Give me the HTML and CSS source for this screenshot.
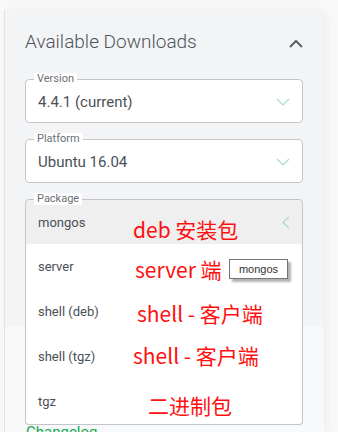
FILE: index.html
```html
<!DOCTYPE html>
<html lang="en">
<head>
	<meta charset="UTF-8">
	<title>Available Downloads</title>
	<link rel="stylesheet" href="styles.css">
</head>
<body>
	<div class="wrap">
		<div class="panel">
			<div class="panel-body">
				<div class="head">
					<h2 class="title">Available Downloads</h2>
					<svg class="collapse" width="14" height="9" viewBox="0 0 14 9"><polyline points="1,8 7,2 13,8" fill="none" stroke="#5b6168" stroke-width="2"/></svg>
				</div>

				<fieldset class="field">
					<legend>Version</legend>
					<div class="value">
						<span>4.4.1 (current)</span>
						<svg width="14" height="8" viewBox="0 0 14 8"><polyline points="1,1 7,7 13,1" fill="none" stroke="#a9dcc4" stroke-width="1.2"/></svg>
					</div>
				</fieldset>

				<fieldset class="field">
					<legend>Platform</legend>
					<div class="value">
						<span>Ubuntu 16.04</span>
						<svg width="14" height="8" viewBox="0 0 14 8"><polyline points="1,1 7,7 13,1" fill="none" stroke="#a9dcc4" stroke-width="1.2"/></svg>
					</div>
				</fieldset>

				<fieldset class="field field-open">
					<legend>Package</legend>
					<div class="value value-small">
						<span class="label">mongos</span>
						<span class="note note-deb">deb 安装包</span>
						<svg class="arrow-left" width="8" height="13" viewBox="0 0 8 13"><polyline points="7,1 1,6.5 7,12" fill="none" stroke="#a9dcc4" stroke-width="1.2"/></svg>
					</div>
					<ul class="menu">
						<li><span class="label">server</span><span class="note note-server">server 端</span></li>
						<li><span class="label">shell (deb)</span><span class="note note-sdeb">shell - 客户端</span></li>
						<li><span class="label">shell (tgz)</span><span class="note note-stgz">shell - 客户端</span></li>
						<li><span class="label">tgz</span><span class="note note-tgz">二进制包</span></li>
						<div class="tip">mongos</div>
					</ul>
				</fieldset>
			</div>
			<div class="panel-foot">
				<a class="link" href="#">Changelog</a>
			</div>
		</div>
	</div>
</body>
</html>
```

FILE: styles.css
```css
body { margin: 0;background: #f8f8f8;font-family: Roboto, "Liberation Sans", sans-serif;color: #4b5058; }
.wrap { padding: 10px 14px 0 4px; }
.panel { border-left: 1px solid #e2e3e6;border-top-right-radius: 8px;box-shadow: 3px 0 6px rgba(0,0,0,.04); }
.panel-body { background: #f3f4f6;border-top-right-radius: 8px;padding: 0 21px 81px 20px; }
.panel-foot { background: #f8f9fa;padding: 95px 21px 0 21px;height: 11px;overflow: hidden; }

.head { display: flex;justify-content: space-between;align-items: center;padding-top: 20px;height: 24px;margin-bottom: 19px; }
.title { margin: 0;font-size: 19px;line-height: 24px;font-weight: 300;color: #4d535a; }
.collapse { margin-top: 2px; }

.field { position: relative;margin: 0 0 10px 0;padding: 0 12px;border: 1px solid #c3c5c8;border-radius: 4px;background: #fff; }
.field legend { margin-left: -4px;padding: 0 3px;font-size: 11px;line-height: 12px;color: #6a6f75;background: #fff; }
.value { height: 34px;padding-bottom: 3px;display: flex;justify-content: space-between;align-items: center;font-size: 15px; }
.field-open { background: #efefef;border-bottom-left-radius: 0;border-bottom-right-radius: 0;margin-bottom: 0; }
.value-small { font-size: 13px;height: 34px;padding-bottom: 6px; }
.label { width: 95px;flex-shrink: 0; }
.arrow-left { margin-left: auto; }

.note { font-family: "Noto Sans CJK SC", sans-serif;font-size: 21px;line-height: 24px;font-weight: 400;color: #ff1010;white-space: nowrap; }
.note-deb { margin-top: 14px; }
.note-server { margin-left: 2px;margin-top: 4px; }
.note-sdeb { margin-left: 4px;margin-top: 2px; }
.note-stgz { margin-top: -4px; }
.note-tgz { margin-left: 15px;margin-top: 6px; }

.menu { position: absolute;z-index: 2;top: 100%;left: -1px;right: -1px;margin: -1px 0 0 0;padding: 0;list-style: none;background: #fff;border: 1px solid #c3c5c8;border-top: none;border-radius: 0 0 4px 4px; }
.menu li { height: 45px;padding: 0 12px;display: flex;align-items: center;font-size: 13px;color: #4b5058; }
.tip { position: absolute;left: 203px;top: 15px;width: 57px;height: 18px;border: 1px solid #767676;background: #fff;box-shadow: 3px 3px 2px rgba(0,0,0,.3);font-family: "Liberation Sans", sans-serif;font-size: 11px;line-height: 18px;text-align: center;color: #333; }

.link { font-size: 15px;line-height: 20px;color: #13aa52;text-decoration: none; }
```
